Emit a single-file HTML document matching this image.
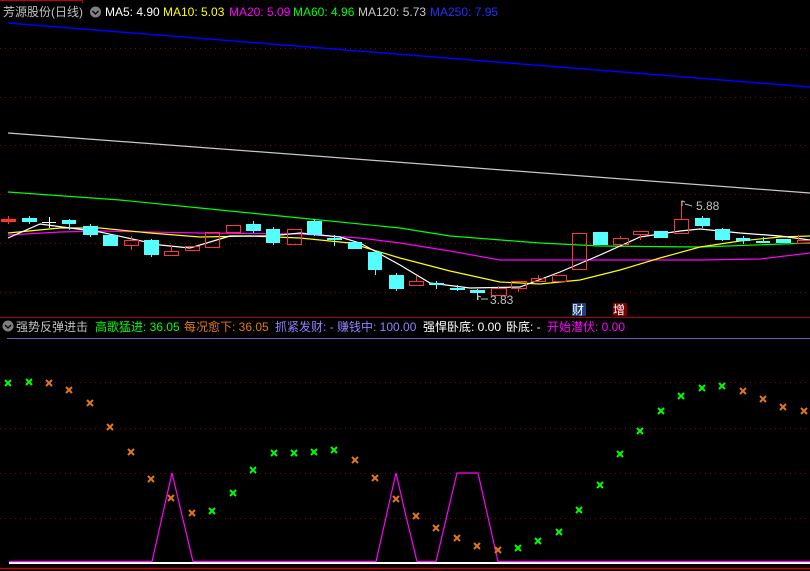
<!DOCTYPE html>
<html><head><meta charset="utf-8"><style>
html,body{margin:0;padding:0;background:#000;width:810px;height:571px;overflow:hidden}
svg{display:block}
text{font-family:"Liberation Sans","Noto Sans CJK SC",sans-serif;font-size:12px}
</style></head><body>
<svg width="810" height="571" viewBox="0 0 810 571" xmlns="http://www.w3.org/2000/svg">
<rect width="810" height="571" fill="#000"/>
<line x1="0" y1="0.5" x2="82" y2="0.5" stroke="#c00000"/>
<line x1="82.5" y1="0" x2="82.5" y2="3" stroke="#c00000"/>
<g stroke="#8a0000" stroke-dasharray="1 4">
<line x1="0" y1="48.5" x2="810" y2="48.5"/><line x1="0" y1="97.5" x2="810" y2="97.5"/>
<line x1="0" y1="145.5" x2="810" y2="145.5"/><line x1="0" y1="194.5" x2="810" y2="194.5"/>
<line x1="0" y1="243.5" x2="810" y2="243.5"/><line x1="0" y1="292.5" x2="810" y2="292.5"/>
<line x1="0" y1="382.5" x2="810" y2="382.5"/><line x1="0" y1="428.5" x2="810" y2="428.5"/>
<line x1="0" y1="473.5" x2="810" y2="473.5"/><line x1="0" y1="518.5" x2="810" y2="518.5"/>
</g>
<line x1="0" y1="317.5" x2="810" y2="317.5" stroke="#b00000"/>
<line x1="7" y1="338.5" x2="810" y2="338.5" stroke="#8050c0"/>
<line x1="0" y1="568.5" x2="810" y2="568.5" stroke="#d00000" stroke-width="1.5"/>
<!-- MAs -->
<polyline fill="none" stroke="#0000ff" stroke-width="1.5" points="8,23 810,87"/>
<polyline fill="none" stroke="#c8c8c8" stroke-width="1.3" points="8,133 810,193"/>
<polyline fill="none" stroke="#00ff00" stroke-width="1.2" points="8,192 120,200 200,208 300,218 400,228 450,236 540,243 600,246 700,247 810,243"/>
<polyline fill="none" stroke="#ff00ff" stroke-width="1.2" points="8,235 60,232 100,231 200,233 300,234 360,238 400,243 450,251 500,260 560,260 650,260 700,260 760,259 810,253"/>
<polyline fill="none" stroke="#ffff00" stroke-width="1.2" points="8,233 60,228 100,228 150,233 200,237 250,236 300,238 350,243 400,258 450,271 500,282 540,284 580,280 620,270 660,258 700,247 740,241 780,237 810,236"/>
<polyline fill="none" stroke="#ffffff" stroke-width="1.2" points="8,238 40,224 100,232 160,245 190,248 230,236 270,236 300,233 340,237 360,243 400,265 430,283 470,288 520,287 560,272 600,255 640,237 680,231 700,229 740,233 780,236 810,240"/>
<!-- candles -->
<g fill="#55ffff">
<rect x="22" y="218" width="15" height="4"/><rect x="62" y="220" width="14" height="4"/>
<rect x="83" y="226" width="15" height="9"/><rect x="103" y="235" width="15" height="11"/>
<rect x="144" y="240" width="15" height="15"/><rect x="246" y="224" width="15" height="7"/>
<rect x="266" y="229" width="14" height="14"/><rect x="307" y="221" width="15" height="14"/>
<rect x="327" y="238" width="15" height="2"/><rect x="348" y="242" width="14" height="7"/>
<rect x="368" y="252" width="14" height="18"/><rect x="389" y="275" width="15" height="14"/>
<rect x="429" y="283" width="15" height="2"/><rect x="450" y="288" width="15" height="2"/>
<rect x="470" y="290" width="15" height="3"/><rect x="593" y="232" width="15" height="13"/>
<rect x="654" y="231" width="14" height="7"/><rect x="695" y="218" width="15" height="8"/>
<rect x="715" y="229" width="15" height="11"/><rect x="736" y="238" width="14" height="3"/>
<rect x="756" y="241" width="14" height="2"/><rect x="776" y="239" width="15" height="4"/>
</g>
<g stroke="#55ffff">
<line x1="29.5" y1="216" x2="29.5" y2="224"/><line x1="69.5" y1="219" x2="69.5" y2="230"/>
<line x1="90.5" y1="224" x2="90.5" y2="237"/><line x1="151.5" y1="239" x2="151.5" y2="257"/>
<line x1="253.5" y1="221" x2="253.5" y2="233"/><line x1="273.5" y1="227" x2="273.5" y2="245"/>
<line x1="314.5" y1="219" x2="314.5" y2="236"/><line x1="334.5" y1="235" x2="334.5" y2="246"/>
<line x1="375.5" y1="250" x2="375.5" y2="275"/><line x1="396.5" y1="273" x2="396.5" y2="291"/>
<line x1="436.5" y1="281" x2="436.5" y2="289"/><line x1="457.5" y1="285" x2="457.5" y2="291"/>
<line x1="477.5" y1="289" x2="477.5" y2="300"/><line x1="702.5" y1="216" x2="702.5" y2="228"/>
<line x1="722.5" y1="228" x2="722.5" y2="241"/><line x1="743.5" y1="236" x2="743.5" y2="244"/>
<line x1="763.5" y1="237" x2="763.5" y2="243"/>
</g>
<g fill="none" stroke="#ff3333">
<rect x="124.5" y="240.5" width="14" height="5"/><line x1="131.5" y1="236" x2="131.5" y2="240"/><line x1="131.5" y1="246" x2="131.5" y2="250"/>
<rect x="164.5" y="251.5" width="14" height="4"/><line x1="171.5" y1="246" x2="171.5" y2="251"/>
<rect x="185.5" y="246.5" width="14" height="4"/>
<rect x="205.5" y="232.5" width="14" height="15"/>
<rect x="226.5" y="225.5" width="14" height="7"/>
<rect x="287.5" y="229.5" width="14" height="15"/>
<rect x="409.5" y="281.5" width="14" height="4"/><line x1="416.5" y1="276" x2="416.5" y2="281"/>
<rect x="491.5" y="288.5" width="15" height="7"/><line x1="498.5" y1="286" x2="498.5" y2="288"/>
<rect x="511.5" y="281.5" width="15" height="7"/><line x1="518.5" y1="289" x2="518.5" y2="292"/>
<rect x="531.5" y="278.5" width="14" height="3"/><line x1="538.5" y1="275" x2="538.5" y2="278"/>
<rect x="552.5" y="275.5" width="14" height="6"/>
<rect x="572.5" y="233.5" width="14" height="36"/>
<rect x="613.5" y="238.5" width="15" height="6"/><line x1="620.5" y1="236" x2="620.5" y2="238"/>
<rect x="633.5" y="231.5" width="15" height="3"/><line x1="640.5" y1="235" x2="640.5" y2="240"/>
<rect x="674.5" y="219.5" width="14" height="14"/><line x1="681.5" y1="201" x2="681.5" y2="219"/>
<rect x="797.5" y="240.5" width="13" height="3"/><line x1="798.5" y1="235" x2="798.5" y2="240"/>
</g>
<rect x="1" y="219" width="15" height="3" fill="#ff3333"/><line x1="8.5" y1="216" x2="8.5" y2="224" stroke="#ff3333"/>
<line x1="42" y1="222.5" x2="56" y2="222.5" stroke="#fff"/><line x1="49.5" y1="217" x2="49.5" y2="228" stroke="#fff"/>
<g fill="none" stroke="#bbb"><polyline points="478,300 478,296 481,297"/><line x1="481" y1="299" x2="488" y2="299"/>
<polyline points="682,206 682,201 685,202"/><line x1="685" y1="204" x2="692" y2="206"/></g>
<text x="490" y="304" fill="#c0c0c0">3.83</text>
<text x="696" y="210" fill="#c0c0c0">5.88</text>
<rect x="572" y="303" width="14" height="13" fill="#1a3f7a"/><text x="572" y="314" fill="#fff">财</text>
<rect x="613" y="303" width="14" height="13" fill="#800000"/><text x="613" y="314" fill="#fff">增</text>
<!-- headers -->
<text x="3" y="16" fill="#c0c0c0" font-size="13">芳源股份(日线)</text>
<circle cx="95.5" cy="12" r="5.5" fill="#808080"/><polyline points="92.5,11 95.5,14 98.5,11" fill="none" stroke="#000" stroke-width="1.3"/>
<text x="105" y="16" fill="#ffffff">MA5: 4.90</text>
<text x="163" y="16" fill="#ffff00">MA10: 5.03</text>
<text x="229" y="16" fill="#ff00ff">MA20: 5.09</text>
<text x="293" y="16" fill="#00ff00">MA60: 4.96</text>
<text x="358" y="16" fill="#c8c8c8">MA120: 5.73</text>
<text x="430" y="16" fill="#2030ff">MA250: 7.95</text>
<circle cx="8" cy="326" r="5.5" fill="#808080"/><polyline points="5,325 8,328 11,325" fill="none" stroke="#000" stroke-width="1.3"/>
<text x="16" y="331" fill="#c0c0c0">强势反弹进击</text>
<text x="95" y="331" fill="#00ff00">高歌猛进: 36.05</text>
<text x="184" y="331" fill="#e07818">每况愈下: 36.05</text>
<text x="275" y="331" fill="#9080ff">抓紧发财: -</text>
<text x="337" y="331" fill="#9080ff">赚钱中: 100.00</text>
<text x="423" y="331" fill="#ffffff">强悍卧底: 0.00</text>
<text x="506" y="331" fill="#ffffff">卧底: -</text>
<text x="547" y="331" fill="#ff00ff">开始潜伏: 0.00</text>
<!-- lower panel -->
<line x1="9" y1="563" x2="810" y2="563" stroke="#fff" stroke-width="2"/>
<polyline fill="none" stroke="#ff00ff" stroke-width="1.2" points="9,561.5 152,561.5 172,473 193,561.5 376,561.5 396,473 405,512 417,561.5 436,561.5 457,473 478,473 498,561.5 810,561.5"/>
<defs>
<g id="g"><path d="M-3,-3L3,3M3,-3L-3,3" stroke="#00ff00" stroke-width="2"/></g>
<g id="o"><path d="M-3,-3L3,3M3,-3L-3,3" stroke="#e07818" stroke-width="2"/></g>
</defs>
<use href="#g" x="8" y="383"/><use href="#g" x="29" y="382"/><use href="#o" x="49" y="383"/>
<use href="#o" x="69" y="390"/><use href="#o" x="90" y="403"/><use href="#o" x="110" y="427"/>
<use href="#o" x="131" y="452"/><use href="#o" x="151" y="479"/><use href="#o" x="171" y="498"/>
<use href="#o" x="192" y="513"/><use href="#g" x="212" y="511"/><use href="#g" x="233" y="493"/>
<use href="#g" x="253" y="470"/><use href="#g" x="274" y="453"/><use href="#g" x="294" y="453"/>
<use href="#g" x="314" y="452"/><use href="#g" x="334" y="450"/><use href="#o" x="355" y="460"/>
<use href="#o" x="375" y="478"/><use href="#o" x="396" y="499"/><use href="#o" x="416" y="516"/>
<use href="#o" x="436" y="528"/><use href="#o" x="457" y="538"/><use href="#o" x="477" y="546"/>
<use href="#o" x="498" y="550"/><use href="#g" x="518" y="548"/><use href="#g" x="538" y="541"/>
<use href="#g" x="559" y="532"/><use href="#g" x="579" y="510"/><use href="#g" x="600" y="485"/>
<use href="#g" x="620" y="454"/><use href="#g" x="640" y="431"/><use href="#g" x="661" y="411"/>
<use href="#g" x="681" y="396"/><use href="#g" x="702" y="388"/><use href="#g" x="722" y="386"/>
<use href="#o" x="743" y="391"/><use href="#o" x="763" y="399"/><use href="#o" x="783" y="407"/>
<use href="#o" x="804" y="411"/>
</svg>
</body></html>
